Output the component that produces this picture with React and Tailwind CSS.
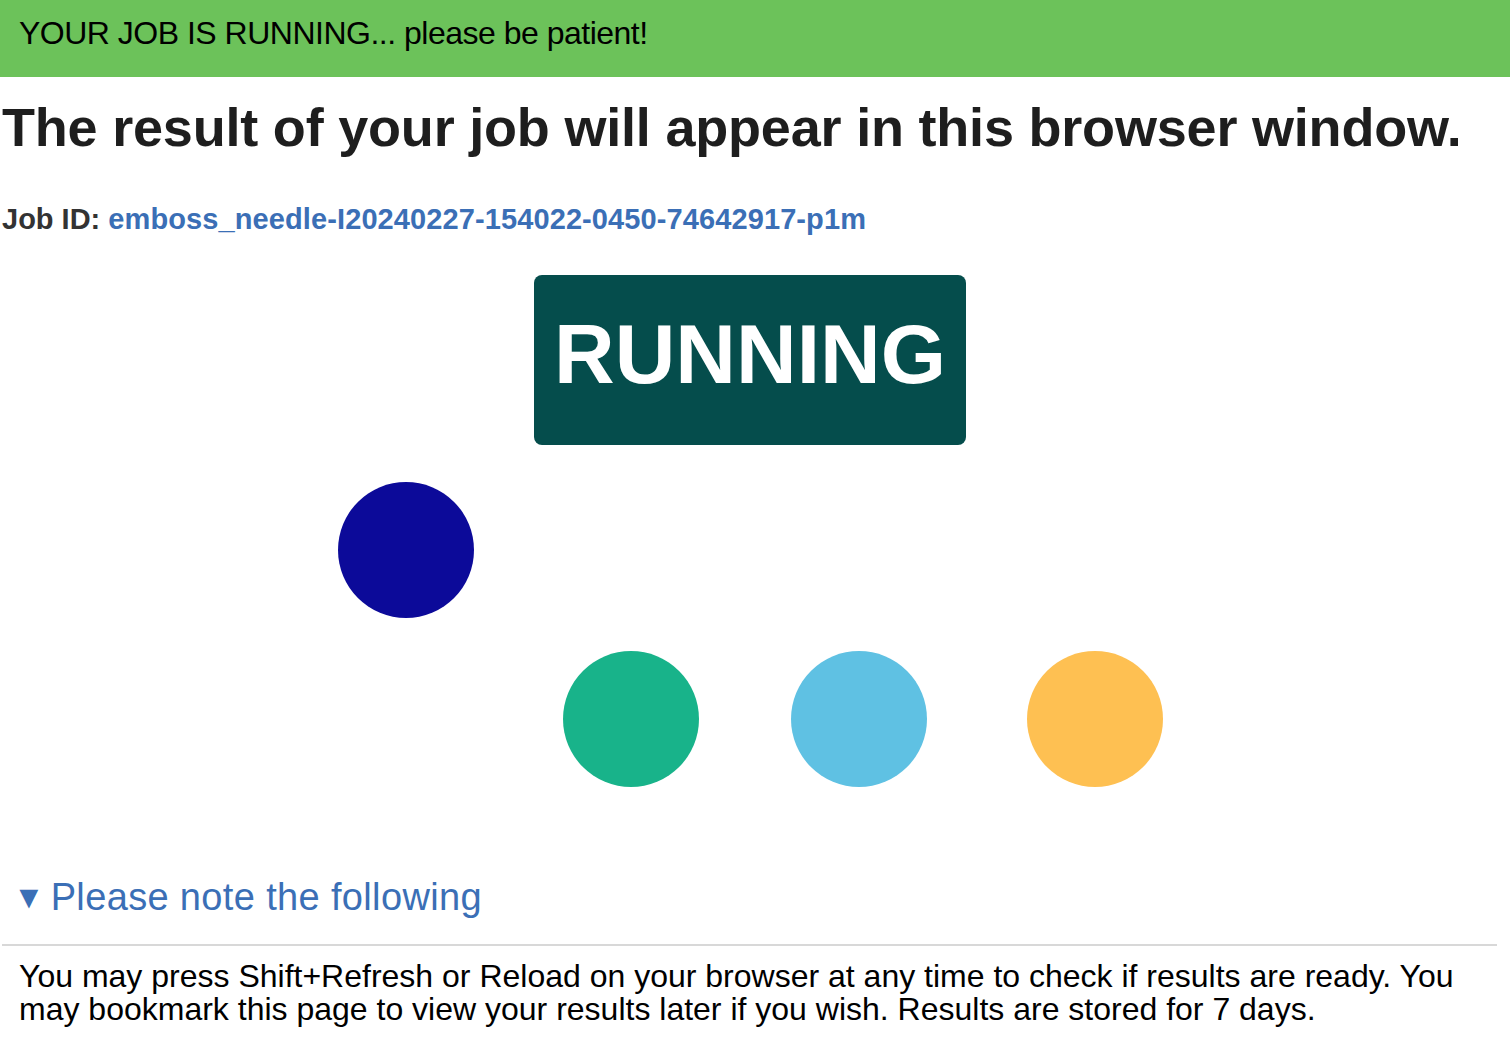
const DOTS = [
  { left: 338, top: 0, color: 'bg-[#0c0a99]' },
  { left: 563, top: 169, color: 'bg-[#18b38a]' },
  { left: 791, top: 169, color: 'bg-[#5fc1e3]' },
  { left: 1027, top: 169, color: 'bg-[#fec052]' },
]

export default function App() {
  return (
    <div className="min-h-screen bg-white text-[#222] font-['Liberation_Sans',sans-serif]">
      <div className="h-[77px] bg-[#6cc25a] flex items-center px-[19px] pb-[12px]">
        <span className="text-[32px] text-black tracking-[-0.5px]">YOUR JOB IS RUNNING... please be patient!</span>
      </div>

      <h1 className="mt-[18px] pl-[2px] text-[54px] leading-[64px] font-semibold text-[#1e1e1e] tracking-[-0.2px]">
        The result of your job will appear in this browser window.
      </h1>

      <p className="mt-[44px] pl-[2px] text-[29px] leading-[32px] font-semibold text-[#333]">
        Job ID: <a className="text-[#3b6fb6] tracking-[0.1px]">emboss_needle-I20240227-154022-0450-74642917-p1m</a>
      </p>

      <div className="mt-[40px] flex justify-center">
        <div className="w-[432px] h-[170px] ml-[-10px] rounded-[8px] bg-[#054d4c] flex items-center justify-center">
          <span className="text-[84px] font-bold text-white mb-[12px]">RUNNING</span>
        </div>
      </div>

      {/* loading dots */}
      <div className="relative mt-[37px] h-[306px]">
        {DOTS.map((d, i) => (
          <div
            key={i}
            className={`absolute w-[136px] h-[136px] rounded-full ${d.color}`}
            style={{ left: d.left, top: d.top }}
          />
        ))}
      </div>

      <div className="mt-[87px] mx-[2px] mr-[13px]">
        <div className="flex items-center pl-[11px] pb-[25px] border-b-2 border-[#d8d8d8] text-[#3b6fb6]">
          <span className="text-[32px] leading-[44px] mr-[6px]">▼</span>
          <span className="text-[38px] leading-[44px] tracking-[0.35px]">Please note the following</span>
        </div>
        <p className="pl-[17px] pt-[14px] text-[32px] leading-[33px] text-black">
          You may press Shift+Refresh or Reload on your browser at any time to check if results are ready. You may bookmark this page to view your results later if you wish. Results are stored for 7 days.
        </p>
      </div>
    </div>
  )
}
